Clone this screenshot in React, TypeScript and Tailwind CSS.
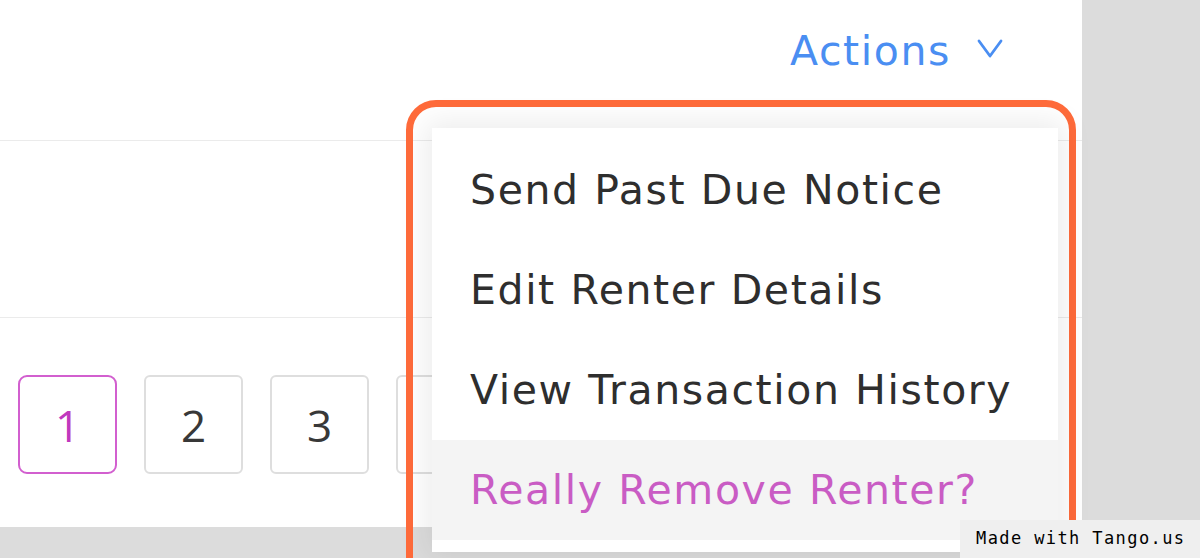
const menuItems = [
  { label: 'Send Past Due Notice', danger: false },
  { label: 'Edit Renter Details', danger: false },
  { label: 'View Transaction History', danger: false },
  { label: 'Really Remove Renter?', danger: true },
]

const pages = ['1', '2', '3', '4']

export default function App() {
  return (
    <div className="relative w-[1200px] h-[558px] overflow-hidden bg-[#dcdcdc] flex font-['DejaVu_Sans',sans-serif]">
      {/* Page content */}
      <div className="w-[1082px] h-[527px] bg-white flex flex-col">
        <div className="h-[141px] border-b border-[#ebebeb] flex items-start justify-end pr-[79px] pt-[31px]">
          <button className="flex items-center gap-[26px] text-[#4a8ef2] text-[41px] leading-none tracking-[1.6px]">
            Actions
            <svg width="26" height="20" viewBox="0 0 26 20" fill="none" className="-mt-[6px]">
              <polyline points="2,2 13,17 24,2" stroke="currentColor" strokeWidth="2.8" strokeLinecap="round" strokeLinejoin="round" />
            </svg>
          </button>
        </div>
        <div className="h-[177px] border-b border-[#ebebeb]" />
        <div className="flex gap-[27px] pl-[18px] pt-[57px]">
          {pages.map((p, i) => (
            <div
              key={p}
              className={
                i === 0
                  ? "w-[99px] h-[99px] rounded-[9px] border-2 border-[#d25fcf] flex items-center justify-center text-[#c038be] text-[44px] font-['Open_Sans',sans-serif]"
                  : "w-[99px] h-[99px] rounded-[6px] border-2 border-[#dedede] flex items-center justify-center text-[#383838] text-[44px] font-['Open_Sans',sans-serif]"
              }
            >
              {p}
            </div>
          ))}
        </div>
      </div>

      {/* Highlight around the dropdown */}
      <div className="absolute left-[406px] top-[100px] w-[670px] h-[490px] rounded-[30px] border-[7px] border-[#ff6b3b]" />

      {/* Dropdown menu */}
      <div className="absolute left-[432px] top-[128px] w-[626px] py-[12px] bg-white shadow-[0_0_28px_6px_rgba(0,0,0,0.08)]">
        {menuItems.map((item) => (
          <div
            key={item.label}
            className={
              item.danger
                ? 'h-[100px] flex items-center pl-[38px] bg-[#f4f4f4] text-[#c95cc4] text-[41px] leading-none tracking-[1.6px]'
                : 'h-[100px] flex items-center pl-[38px] text-[#2e2e2e] text-[41px] leading-none tracking-[1.6px]'
            }
          >
            {item.label}
          </div>
        ))}
      </div>

      {/* Watermark */}
      <div className="absolute right-0 bottom-0 w-[240px] h-[38px] bg-[#efefef] flex items-center pl-[16px] text-[17px] text-black tracking-[1.4px] font-['DejaVu_Sans_Mono',monospace]">
        Made with Tango.us
      </div>
    </div>
  )
}
